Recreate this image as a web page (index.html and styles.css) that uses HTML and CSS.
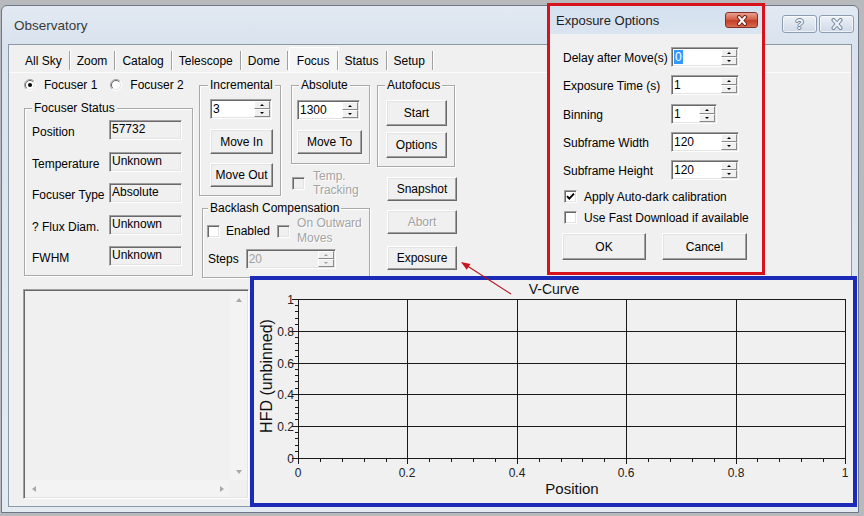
FILE: index.html
```html
<!DOCTYPE html>
<html>
<head>
<meta charset="utf-8">
<title>Observatory</title>
<link rel="stylesheet" href="styles.css">
</head>
<body>
<div class="window">
  <div class="titlebar">
    <span class="title">Observatory</span>
    <div class="capbtns">
      <span class="capbtn help">?</span>
      <span class="capbtn close">
        <svg width="14" height="12" viewBox="0 0 14 12"><path d="M3.5 2 L10.5 10 M10.5 2 L3.5 10" stroke="#72849a" stroke-width="4" stroke-linecap="round"/><path d="M3.5 2 L10.5 10 M10.5 2 L3.5 10" stroke="#f1f4f8" stroke-width="2" stroke-linecap="round"/></svg>
      </span>
    </div>
  </div>
  <div class="client">
    <div class="tabs">
      <span class="tab">All Sky</span>
      <span class="tab">Zoom</span>
      <span class="tab">Catalog</span>
      <span class="tab">Telescope</span>
      <span class="tab">Dome</span>
      <span class="tab active">Focus</span>
      <span class="tab">Status</span>
      <span class="tab">Setup</span>
    </div>
    <div class="panel">
      <div class="top">
        <div class="col-left">
          <div class="radios">
            <span class="radio r1"><svg width="12" height="12" viewBox="0 0 12 12"><circle cx="6" cy="6" r="5" fill="#fff"/><path d="M2.1 9.9 A5.5 5.5 0 0 1 9.9 2.1" stroke="#a0a0a0" fill="none"/><path d="M9.9 2.1 A5.5 5.5 0 0 1 2.1 9.9" stroke="#fff" fill="none"/><path d="M2.8 9.2 A4.5 4.5 0 0 1 9.2 2.8" stroke="#696969" fill="none"/><path d="M9.2 2.8 A4.5 4.5 0 0 1 2.8 9.2" stroke="#e3e3e3" fill="none"/><circle cx="6" cy="6" r="2" fill="#000"/></svg></span>
            <span class="rlabel">Focuser 1</span>
            <span class="radio r2"><svg width="12" height="12" viewBox="0 0 12 12"><circle cx="6" cy="6" r="5" fill="#fff"/><path d="M2.1 9.9 A5.5 5.5 0 0 1 9.9 2.1" stroke="#a0a0a0" fill="none"/><path d="M9.9 2.1 A5.5 5.5 0 0 1 2.1 9.9" stroke="#fff" fill="none"/><path d="M2.8 9.2 A4.5 4.5 0 0 1 9.2 2.8" stroke="#696969" fill="none"/><path d="M9.2 2.8 A4.5 4.5 0 0 1 2.8 9.2" stroke="#e3e3e3" fill="none"/></svg></span>
            <span class="rlabel">Focuser 2</span>
          </div>
          <fieldset class="group status">
            <legend>Focuser Status</legend>
            <div class="status-grid">
              <span class="slabel">Position</span><span class="ro">57732</span>
              <span class="slabel">Temperature</span><span class="ro">Unknown</span>
              <span class="slabel">Focuser Type</span><span class="ro">Absolute</span>
              <span class="slabel">? Flux Diam.</span><span class="ro">Unknown</span>
              <span class="slabel">FWHM</span><span class="ro">Unknown</span>
            </div>
          </fieldset>
        </div>

        <div class="col-mid">
          <div class="mid-row">
            <fieldset class="group incr">
              <legend>Incremental</legend>
              <div class="spin s-incr"><span class="val">3</span><span class="sbtns"><i class="up"></i><i class="dn"></i></span></div>
              <div class="btn b-movein">Move In</div>
              <div class="btn b-moveout">Move Out</div>
            </fieldset>
            <div class="abs-col">
              <fieldset class="group abs">
                <legend>Absolute</legend>
                <div class="spin s-abs"><span class="val">1300</span><span class="sbtns"><i class="up"></i><i class="dn"></i></span></div>
                <div class="btn b-moveto">Move To</div>
              </fieldset>
              <div class="check temp">
                <span class="cb dis"></span>
                <span class="ctext dis">Temp.<br>Tracking</span>
              </div>
            </div>
          </div>
          <fieldset class="group backlash">
            <legend>Backlash Compensation</legend>
            <div class="bl-row">
              <span class="cb"></span>
              <span class="bl-en">Enabled</span>
              <span class="cb dis"></span>
              <span class="ctext dis bl-out">On Outward<br>Moves</span>
            </div>
            <div class="bl-steps">
              <span class="steps-label">Steps</span>
              <div class="spin s-steps dis"><span class="val">20</span><span class="sbtns"><i class="up"></i><i class="dn"></i></span></div>
            </div>
          </fieldset>
        </div>

        <div class="col-auto">
          <fieldset class="group auto">
            <legend>Autofocus</legend>
            <div class="btn b-start">Start</div>
            <div class="btn b-options">Options</div>
          </fieldset>
          <div class="btn b-side b-snap">Snapshot</div>
          <div class="btn b-side b-abort dis">Abort</div>
          <div class="btn b-side b-expo">Exposure</div>
        </div>
      </div>

      <div class="log">
        <div class="log-body"></div>
        <div class="vscroll"><span class="sb"><i class="ar up"></i></span><span class="sb"><i class="ar dn"></i></span></div>
        <div class="hscroll"><span class="sb"><i class="ar lt"></i></span><span class="sb"><i class="ar rt"></i></span></div>
        <div class="corner"></div>
      </div>
    </div>
  </div>
</div>

<div class="dialog">
  <div class="dlg-title">
    <span class="dlg-caption">Exposure Options</span>
    <span class="dlg-close"><svg width="14" height="11" viewBox="0 0 14 11"><path d="M4 2 L10 9 M10 2 L4 9" stroke="#6e1f16" stroke-width="4" stroke-linecap="round"/><path d="M4 2 L10 9 M10 2 L4 9" stroke="#fff" stroke-width="2" stroke-linecap="round"/></svg></span>
  </div>
  <div class="dlg-body">
    <div class="dlg-grid">
      <span class="dlabel">Delay after Move(s)</span>
      <div class="spin s-dlg"><span class="val"><span class="sel">0</span></span><span class="sbtns"><i class="up"></i><i class="dn"></i></span></div>
      <span class="dlabel">Exposure Time (s)</span>
      <div class="spin s-dlg"><span class="val">1</span><span class="sbtns"><i class="up"></i><i class="dn"></i></span></div>
      <span class="dlabel">Binning</span>
      <div class="spin s-bin"><span class="val">1</span><span class="sbtns"><i class="up"></i><i class="dn"></i></span></div>
      <span class="dlabel">Subframe Width</span>
      <div class="spin s-dlg"><span class="val">120</span><span class="sbtns"><i class="up"></i><i class="dn"></i></span></div>
      <span class="dlabel">Subframe Height</span>
      <div class="spin s-dlg"><span class="val">120</span><span class="sbtns"><i class="up"></i><i class="dn"></i></span></div>
    </div>
    <div class="check dlg-check c1">
      <span class="cb"><svg width="11" height="11" viewBox="0 0 11 11"><path d="M2 5.2 L4.3 7.6 L9 2.6" stroke="#000" stroke-width="1.9" fill="none"/></svg></span>
      <span class="ctext">Apply Auto-dark calibration</span>
    </div>
    <div class="check dlg-check c2">
      <span class="cb"></span>
      <span class="ctext">Use Fast Download if available</span>
    </div>
    <div class="dlg-btns">
      <div class="btn b-ok">OK</div>
      <div class="btn b-cancel">Cancel</div>
    </div>
  </div>
</div>

<div class="chart">
  <svg class="chart-svg" width="599" height="223" viewBox="0 0 599 223">
    <text x="300" y="14" text-anchor="middle" class="ctitle">V-Curve</text>
    <g stroke="#1a1a1a" stroke-width="1" fill="none" shape-rendering="crispEdges">
      <path d="M44.5 19 V184 M153.5 19 V184 M263.5 19 V184 M372.5 19 V184 M482.5 19 V184 M591.5 19 V184"/>
      <path d="M38 19.5 H592 M38 51.5 H592 M38 83.5 H592 M38 114.5 H592 M38 146.5 H592 M38 178.5 H592"/>
      <path d="M41 25.5 H44 M41 31.5 H44 M41 38.5 H44 M41 44.5 H44 M41 57.5 H44 M41 63.5 H44 M41 70.5 H44 M41 76.5 H44 M41 89.5 H44 M41 95.5 H44 M41 101.5 H44 M41 108.5 H44 M41 120.5 H44 M41 127.5 H44 M41 133.5 H44 M41 139.5 H44 M41 152.5 H44 M41 158.5 H44 M41 165.5 H44 M41 171.5 H44"/>
      <path d="M66.5 179 V182 M88.5 179 V182 M110.5 179 V182 M132.5 179 V182 M175.5 179 V182 M197.5 179 V182 M219.5 179 V182 M241.5 179 V182 M285.5 179 V182 M307.5 179 V182 M328.5 179 V182 M350.5 179 V182 M394.5 179 V182 M416.5 179 V182 M438.5 179 V182 M460.5 179 V182 M503.5 179 V182 M525.5 179 V182 M547.5 179 V182 M569.5 179 V182"/>
    </g>
    <g class="tick" text-anchor="end">
      <text x="40" y="24">1</text>
      <text x="40" y="56">0.8</text>
      <text x="40" y="88">0.6</text>
      <text x="40" y="119">0.4</text>
      <text x="40" y="151">0.2</text>
      <text x="40" y="183">0</text>
    </g>
    <g class="tick" text-anchor="middle">
      <text x="44" y="197">0</text>
      <text x="153" y="197">0.2</text>
      <text x="263" y="197">0.4</text>
      <text x="372" y="197">0.6</text>
      <text x="482" y="197">0.8</text>
      <text x="591" y="197">1</text>
    </g>
    <text x="318" y="214" text-anchor="middle" class="axtitle">Position</text>
    <text transform="translate(18 96) rotate(-90)" text-anchor="middle" class="axtitle ytitle">HFD (unbinned)</text>
  </svg>
</div>

<svg class="arrow" width="60" height="50" viewBox="0 0 60 50">
  <path d="M56 44 L12 15.7" stroke="#b3141c" stroke-width="1.1" fill="none"/>
  <path d="M6 12 L15.5 13.9 L11.7 19.8 Z" fill="#c8141c"/>
</svg>
</body>
</html>
```

FILE: styles.css
```css
html, body {
  margin: 0;
  padding: 0;
  width: 864px;
  height: 516px;
  overflow: hidden;
}

body {
  position: relative;
  background: #b7b9bc;
  font-family: "Liberation Sans", Arial, sans-serif;
  font-size: 12px;
  color: #000;
}

/* ---------- main window ---------- */
.window {
  margin: 5px 0 0 1px;
  width: 856px;
  height: 506px;
  border: 1px solid #6c7888;
  border-radius: 6px 6px 0 0;
  background: linear-gradient(#e2e9f2, #d9e3ee 40px, #e4eaf1);
  display: flex;
  flex-direction: column;
}

.titlebar {
  height: 38px;
  display: flex;
  align-items: flex-start;
  padding: 0 4px 0 12px;
  flex: none;
}

.title {
  margin-top: 13px;
  line-height: 14px;
  font-size: 13.5px;
  color: #3a3a3a;
}

.capbtns {
  margin-left: auto;
  margin-top: 9px;
  display: flex;
  gap: 2px;
}

.capbtn {
  width: 35px;
  height: 18px;
  box-sizing: border-box;
  border: 1px solid #8c9db2;
  border-radius: 3px;
  background: linear-gradient(#eef2f7, #dde5ef 50%, #d0dae7);
  box-shadow: inset 0 0 0 1px rgba(255,255,255,0.6);
  display: flex;
  align-items: center;
  justify-content: center;
}

.capbtn.help {
  font-weight: bold;
  font-size: 14px;
  line-height: 16px;
  color: #eef2f6;
  text-shadow: 1px 0 #72849a, -1px 0 #72849a, 0 1px #72849a, 0 -1px #72849a;
}

.client {
  margin: 0 6px 5px 6px;
  flex: 1;
  border: 1px solid #8b98a8;
  background: #f0f0f0;
}

/* ---------- tabs ---------- */
.tabs {
  display: flex;
  height: 24px;
  margin-top: 3px;
  padding-left: 10px;
}

.tab {
  position: relative;
  padding: 2px 9px 0 6px;
  line-height: 22px;
  height: 24px;
  box-sizing: border-box;
}

.tab::after {
  content: "";
  position: absolute;
  right: 0;
  top: 3px;
  height: 19px;
  width: 0;
  border-left: 1px solid #a0a0a0;
  border-right: 1px solid #fff;
}

.tab.active {
  margin-top: -1px;
  height: 25px;
  padding-left: 7px;
  border-top: 1px solid #fff;
  border-left: 1px solid #fff;
  background: #f6f6f6;
}

.panel {
  border-top: 1px solid #fbfbfb;
  padding: 3px 0 0 14px;
}

.top {
  display: flex;
  align-items: flex-start;
}

/* ---------- group boxes ---------- */
.group {
  margin: 0;
  padding: 0;
  min-width: 0;
  box-sizing: border-box;
  border: 1px solid #a9a9a9;
  box-shadow: inset 1px 1px 0 #fff, 1px 1px 0 #fff;
}

.group > legend {
  padding: 0 2px;
  line-height: 14px;
  background: #f0f0f0;
}

/* ---------- left column ---------- */
.col-left {
  width: 170px;
}

.radios {
  height: 18px;
  display: flex;
  align-items: center;
  margin-bottom: 7px;
}

.radio {
  width: 12px;
  height: 12px;
  display: flex;
}

.radio.r1 { margin-left: 1px; }
.radio.r2 { margin-left: 13px; }

.rlabel { margin-left: 8px; }

.status {
  margin-left: 1px;
  width: 169px;
  height: 175px;
  padding: 5px 0 0 7px;
}

.status > legend { margin-left: 0; }

.status-grid {
  display: grid;
  grid-template-columns: 77px 73px;
  grid-auto-rows: 20px;
  row-gap: 11.5px;
}

.slabel {
  padding-top: 5px;
  line-height: 14px;
  white-space: nowrap;
}

.ro {
  box-sizing: border-box;
  height: 20px;
  border: 1px solid;
  border-color: #a0a0a0 #fff #fff #a0a0a0;
  box-shadow: inset 1px 1px 0 #696969, inset -1px -1px 0 #e3e3e3;
  padding: 1px 0 0 2px;
  line-height: 14px;
  background: #f0f0f0;
}

/* ---------- spin boxes ---------- */
.spin {
  display: flex;
  height: 20px;
  box-sizing: border-box;
  border: 1px solid;
  border-color: #a0a0a0 #fff #fff #a0a0a0;
  box-shadow: inset 1px 1px 0 #696969, inset -1px -1px 0 #e3e3e3;
  background: #fff;
}

.spin .val {
  flex: 1;
  padding: 2px 0 0 2px;
  line-height: 14px;
}

.spin .sel {
  background: #3399ff;
  color: #fff;
  padding: 0 1px;
}

.sbtns {
  width: 17px;
  display: flex;
  flex-direction: column;
  padding: 1px 1px 1px 0;
  box-sizing: border-box;
}

.sbtns i {
  flex: 1;
  box-sizing: border-box;
  background: #f0f0f0;
  border: 1px solid;
  border-color: #fff #8a8a8a #8a8a8a #fff;
  display: flex;
  align-items: center;
  justify-content: center;
}

.sbtns i::after {
  content: "";
  width: 0;
  height: 0;
  border-left: 2px solid transparent;
  border-right: 2px solid transparent;
}

.sbtns i.up::after { border-bottom: 2px solid #000; }
.sbtns i.dn::after { border-top: 2px solid #000; }

.spin.dis { background: #f0f0f0; color: #a0a0a0; }
.spin.dis .sbtns i.up::after { border-bottom-color: #a0a0a0; }
.spin.dis .sbtns i.dn::after { border-top-color: #a0a0a0; }

/* ---------- buttons ---------- */
.btn {
  box-sizing: border-box;
  display: flex;
  align-items: center;
  justify-content: center;
  border: 1px solid;
  border-color: #fff #696969 #696969 #fff;
  box-shadow: inset -1px -1px 0 #a0a0a0, inset 1px 1px 0 #e3e3e3;
  background: #f0f0f0;
  white-space: nowrap;
}

.btn.dis { color: #a0a0a0; text-shadow: 1px 1px 0 #fff; }

/* ---------- checkboxes ---------- */
.check {
  display: flex;
  align-items: center;
}

.cb {
  flex: none;
  width: 13px;
  height: 13px;
  box-sizing: border-box;
  border: 1px solid;
  border-color: #a0a0a0 #fff #fff #a0a0a0;
  box-shadow: inset 1px 1px 0 #696969, inset -1px -1px 0 #e3e3e3;
  background: #fff;
  display: flex;
  align-items: center;
  justify-content: center;
}

.cb.dis { background: #f0f0f0; }

.ctext { line-height: 14px; }
.ctext.dis { color: #a3a3a3; text-shadow: 1px 1px 0 #fff; }

/* ---------- middle column ---------- */
.col-mid {
  margin-left: 6px;
  margin-top: 2px;
}

.mid-row {
  display: flex;
  align-items: flex-start;
}

.incr {
  width: 82px;
  height: 118px;
  padding: 7px 0 0 10px;
}

.incr > legend { margin-left: -2px; }

.s-incr { width: 62px; }

.b-movein { width: 63px; height: 25px; margin-top: 10px; }
.b-moveout { width: 63px; height: 24px; margin-top: 9px; }

.abs-col { margin-left: 10px; }

.abs {
  width: 79px;
  height: 86px;
  padding: 8px 0 0 5px;
}

.abs > legend { margin-left: 2px; }

.s-abs { width: 63px; }

.b-moveto { width: 65px; height: 24px; margin-top: 10px; }

.temp {
  margin-top: 5px;
  margin-left: 1px;
}

.temp .ctext { margin-left: 8px; }

.backlash {
  margin-top: 4px;
  margin-left: 3px;
  width: 168px;
  height: 77px;
  padding: 1px 0 0 4px;
}

.backlash > legend { margin-left: 1px; }

.bl-row {
  display: flex;
  align-items: center;
  height: 30px;
}

.bl-row .ctext { line-height: 15px; }

.bl-en { margin-left: 6px; margin-right: 7px; }
.bl-out { margin-left: 7px; }

.bl-steps {
  display: flex;
  align-items: center;
  margin-top: 3px;
  margin-left: 1px;
}

.s-steps { width: 90px; margin-left: 7px; }

/* ---------- autofocus column ---------- */
.col-auto {
  margin-left: 7px;
  margin-top: 2px;
}

.auto {
  width: 78px;
  height: 89px;
  padding: 8px 0 0 8px;
}

.auto > legend { margin-left: -1px; }

.b-start { width: 61px; height: 26px; }
.b-options { width: 61px; height: 26px; margin-top: 6px; }

.b-side { width: 70px; height: 24px; margin-left: 10px; }
.b-snap { margin-top: 10px; }
.b-abort { margin-top: 9px; }
.b-expo { margin-top: 12px; }

/* ---------- log panel ---------- */
.log {
  margin-top: 11px;
  width: 226px;
  height: 210px;
  box-sizing: border-box;
  border: 1px solid;
  border-color: #a0a0a0 #fff #fff #a0a0a0;
  box-shadow: inset 1px 1px 0 #696969, inset -1px -1px 0 #e3e3e3;
  padding: 1px;
  display: grid;
  grid-template-columns: 1fr 17px;
  grid-template-rows: 1fr 17px;
  background: #f0f0f0;
}

.vscroll {
  display: flex;
  flex-direction: column;
  justify-content: space-between;
  background: #f3f3f3;
}

.hscroll {
  display: flex;
  justify-content: space-between;
  background: #f3f3f3;
}

.sb {
  width: 17px;
  height: 17px;
  display: flex;
  align-items: center;
  justify-content: center;
}

.ar { width: 0; height: 0; }
.ar.up { border-left: 3.5px solid transparent; border-right: 3.5px solid transparent; border-bottom: 4px solid #a8a8a8; }
.ar.dn { border-left: 3.5px solid transparent; border-right: 3.5px solid transparent; border-top: 4px solid #a8a8a8; }
.ar.lt { border-top: 3.5px solid transparent; border-bottom: 3.5px solid transparent; border-right: 4px solid #a8a8a8; }
.ar.rt { border-top: 3.5px solid transparent; border-bottom: 3.5px solid transparent; border-left: 4px solid #a8a8a8; }

.corner { background: #f0f0f0; }

/* ---------- exposure options dialog ---------- */
.dialog {
  position: absolute;
  left: 547px;
  top: 3px;
  width: 218px;
  height: 272px;
  box-sizing: border-box;
  border: 3px solid #d8121c;
  background: #f0f0f0;
  display: flex;
  flex-direction: column;
}

.dlg-title {
  height: 28px;
  flex: none;
  display: flex;
  align-items: flex-start;
  padding: 0 4px 0 6px;
  background: linear-gradient(#d3e0ee, #dbe5f1);
}

.dlg-caption {
  margin-top: 8px;
  line-height: 14px;
  font-size: 13px;
  color: #1e1e1e;
}

.dlg-close {
  margin-left: auto;
  margin-top: 6px;
  width: 33px;
  height: 16px;
  box-sizing: border-box;
  border: 1px solid #83302a;
  border-radius: 3px;
  background: linear-gradient(#e9a08f, #d4604a 45%, #c23e27 55%, #d86c4f);
  display: flex;
  align-items: center;
  justify-content: center;
}

.dlg-body {
  padding: 13px 0 0 13px;
}

.dlg-grid {
  display: grid;
  grid-template-columns: 108px auto;
  grid-auto-rows: 20px;
  row-gap: 8.25px;
  align-items: center;
}

.dlabel {
  margin-top: 2px;
  white-space: nowrap;
  line-height: 14px;
}

.s-dlg { width: 68px; }
.s-bin { width: 46px; }

.dlg-check {
  height: 15px;
  margin-left: 1px;
}

.dlg-check .ctext { margin-left: 7px; }
.dlg-check.c1 { margin-top: 9px; }
.dlg-check.c2 { margin-top: 6px; }

.dlg-btns {
  display: flex;
  gap: 16px;
  margin-top: 8px;
  margin-left: -1px;
}

.b-ok { width: 84px; height: 27px; }
.b-cancel { width: 85px; height: 27px; }

/* ---------- V-curve chart ---------- */
.chart {
  position: absolute;
  left: 250px;
  top: 276px;
  width: 607px;
  height: 231px;
  box-sizing: border-box;
  border: 4px solid #1b2bb7;
  background: #f0f0f0;
}

.chart-svg {
  display: block;
  font-family: "Liberation Sans", Arial, sans-serif;
}

.ctitle { font-size: 14px; fill: #111; }
.tick text { font-size: 12px; fill: #222; }
.axtitle { font-size: 15px; fill: #111; }
.axtitle.ytitle { font-size: 16px; }

/* ---------- annotation arrow ---------- */
.arrow {
  position: absolute;
  left: 455px;
  top: 250px;
  z-index: 5;
}
```
